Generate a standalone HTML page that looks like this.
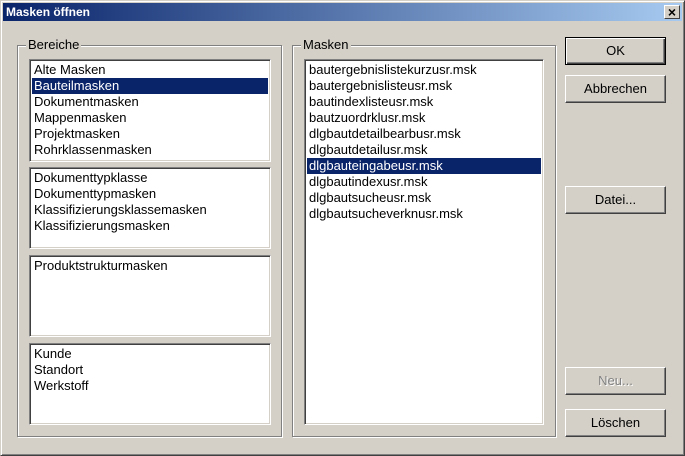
<!DOCTYPE html><html><head><style>
*{margin:0;padding:0;box-sizing:border-box}
body{width:685px;height:456px;background:#d4d0c8;font-family:"Liberation Sans",sans-serif;font-size:13px;position:relative;overflow:hidden}
.win{position:absolute;left:0;top:0;width:685px;height:456px;border:1px solid;border-color:#d4d0c8 #404040 #404040 #d4d0c8;box-shadow:inset 1px 1px 0 #fff,inset -1px -1px 0 #808080}
.title{position:absolute;left:3px;top:3px;width:679px;height:18px;background:linear-gradient(90deg,#0a246a,#a6caf0);color:#fff;font-weight:bold;font-size:12px;line-height:18px;padding-left:3px}
.x{position:absolute;right:2px;top:2px;width:16px;height:14px;background:#d4d0c8;border:1px solid;border-color:#fff #404040 #404040 #fff;color:#000;font-size:14px;line-height:12px;text-align:center;font-weight:bold}
.grp{position:absolute;border:1px solid #808080;box-shadow:1px 1px 0 #fff,inset 1px 1px 0 #fff}
.lbl{position:absolute;background:#d4d0c8;padding:0 2px;top:-9px;left:8px;line-height:16px}
.lst{position:absolute;background:#fff;border:1px solid;border-color:#808080 #fff #fff #808080;box-shadow:inset 1px 1px 0 #404040,inset -1px -1px 0 #d4d0c8;padding:2px}
.lst div{height:16px;line-height:16px;padding-left:2px;white-space:nowrap}
.sel{background:#0a246a;color:#fff}
.btn{position:absolute;left:565px;width:101px;height:28px;border:1px solid;border-color:#fff #404040 #404040 #fff;box-shadow:inset -1px -1px 0 #808080;text-align:center;line-height:26px}
</style></head><body>
<div class="win"></div>
<div class="title">Masken öffnen<div class="x">×</div></div>
<div class="grp" style="left:17px;top:45px;width:265px;height:392px"><span class="lbl">Bereiche</span></div>
<div class="grp" style="left:292px;top:45px;width:264px;height:392px"><span class="lbl">Masken</span></div>
<div class="lst" style="left:29px;top:59px;width:242px;height:103px"><div>Alte Masken</div><div class="sel">Bauteilmasken</div><div>Dokumentmasken</div><div>Mappenmasken</div><div>Projektmasken</div><div>Rohrklassenmasken</div></div>
<div class="lst" style="left:29px;top:167px;width:242px;height:82px"><div>Dokumenttypklasse</div><div>Dokumenttypmasken</div><div>Klassifizierungsklassemasken</div><div>Klassifizierungsmasken</div></div>
<div class="lst" style="left:29px;top:255px;width:242px;height:82px"><div>Produktstrukturmasken</div></div>
<div class="lst" style="left:29px;top:343px;width:242px;height:82px"><div>Kunde</div><div>Standort</div><div>Werkstoff</div></div>
<div class="lst" style="left:304px;top:59px;width:240px;height:366px"><div>bautergebnislistekurzusr.msk</div><div>bautergebnislisteusr.msk</div><div>bautindexlisteusr.msk</div><div>bautzuordrklusr.msk</div><div>dlgbautdetailbearbusr.msk</div><div>dlgbautdetailusr.msk</div><div class="sel">dlgbauteingabeusr.msk</div><div>dlgbautindexusr.msk</div><div>dlgbautsucheusr.msk</div><div>dlgbautsucheverknusr.msk</div></div>
<div class="btn" style="top:37px;border:1px solid #000;box-shadow:inset 1px 1px 0 #fff,inset -1px -1px 0 #404040,inset -2px -2px 0 #808080">OK</div>
<div class="btn" style="top:75px">Abbrechen</div>
<div class="btn" style="top:186px">Datei...</div>
<div class="btn" style="top:367px;color:#808080;text-shadow:1px 1px 0 #fff">Neu...</div>
<div class="btn" style="top:409px">Löschen</div>
</body></html>
